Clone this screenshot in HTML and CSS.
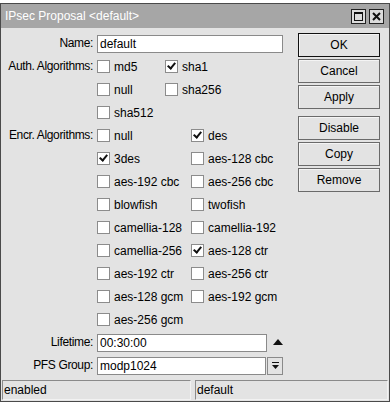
FILE: index.html
```html
<!DOCTYPE html>
<html lang="en">
<head>
    <meta charset="UTF-8">
    <title>IPsec Proposal &lt;default&gt;</title>
    <link rel="stylesheet" href="styles.css">
</head>
<body>
    <div class="window">
        <div class="titlebar">
            <span class="title">IPsec Proposal &lt;default&gt;</span>
            <div class="title-buttons">
                <span class="tbtn">
                    <svg width="11" height="11" viewBox="0 0 11 11"><rect x="1.5" y="1.5" width="8" height="8" fill="none" stroke="#111" stroke-width="1"/><line x1="1" y1="2" x2="10" y2="2" stroke="#111" stroke-width="2"/></svg>
                </span>
                <span class="tbtn">
                    <svg width="11" height="11" viewBox="0 0 11 11"><path d="M2 2 L9 9 M9 2 L2 9" stroke="#111" stroke-width="2"/></svg>
                </span>
            </div>
        </div>

        <div class="content">
            <div class="form">
                <div class="lbl">Name:</div>
                <div class="row"><div class="textbox wide">default</div></div>

                <div class="lbl">Auth. Algorithms:</div>
                <div class="checks auth">
                    <div class="check"><span class="box"></span>md5</div>
                    <div class="check"><span class="box on"></span>sha1</div>
                    <div class="check"><span class="box"></span>null</div>
                    <div class="check"><span class="box"></span>sha256</div>
                    <div class="check"><span class="box"></span>sha512</div>
                </div>

                <div class="lbl">Encr. Algorithms:</div>
                <div class="checks encr">
                    <div class="check"><span class="box"></span>null</div>
                    <div class="check"><span class="box on"></span>des</div>
                    <div class="check"><span class="box on"></span>3des</div>
                    <div class="check"><span class="box"></span>aes-128 cbc</div>
                    <div class="check"><span class="box"></span>aes-192 cbc</div>
                    <div class="check"><span class="box"></span>aes-256 cbc</div>
                    <div class="check"><span class="box"></span>blowfish</div>
                    <div class="check"><span class="box"></span>twofish</div>
                    <div class="check"><span class="box"></span>camellia-128</div>
                    <div class="check"><span class="box"></span>camellia-192</div>
                    <div class="check"><span class="box"></span>camellia-256</div>
                    <div class="check"><span class="box on"></span>aes-128 ctr</div>
                    <div class="check"><span class="box"></span>aes-192 ctr</div>
                    <div class="check"><span class="box"></span>aes-256 ctr</div>
                    <div class="check"><span class="box"></span>aes-128 gcm</div>
                    <div class="check"><span class="box"></span>aes-192 gcm</div>
                    <div class="check"><span class="box"></span>aes-256 gcm</div>
                </div>

                <div class="lbl">Lifetime:</div>
                <div class="row">
                    <div class="textbox">00:30:00</div>
                    <span class="up-arrow"></span>
                </div>

                <div class="lbl">PFS Group:</div>
                <div class="row">
                    <div class="textbox">modp1024</div>
                    <span class="drop">
                        <svg width="9" height="10" viewBox="0 0 9 10"><rect x="1" y="1" width="7" height="1" fill="#111"/><path d="M1 4 H8 L4.5 8 Z" fill="#111"/></svg>
                    </span>
                </div>
            </div>

            <div class="actions">
                <div class="btn default">OK</div>
                <div class="btn">Cancel</div>
                <div class="btn">Apply</div>
                <div class="btn spaced">Disable</div>
                <div class="btn">Copy</div>
                <div class="btn">Remove</div>
            </div>
        </div>

        <div class="statusbar">
            <div class="panel left">enabled</div>
            <div class="panel right">default</div>
        </div>
    </div>
</body>
</html>
```

FILE: styles.css
```css
body {
    margin: 0;
    background-color: #ffffff;
    font-family: 'Liberation Sans', Arial, sans-serif;
    font-size: 12px;
    color: #000;
}
.window {
    margin-top: 3px;
    width: 388px;
    border: 1px solid #4a4a4a;
    background-color: #e3e3e3;
    padding-bottom: 1px;
}
.titlebar {
    height: 24px;
    background-color: #a6a6a6;
    display: flex;
    align-items: center;
    justify-content: space-between;
    padding: 0 5px 0 4px;
}
.title {
    color: #ffffff;
    font-size: 12px;
}
.title-buttons {
    display: flex;
    gap: 3px;
}
.tbtn {
    width: 13px;
    height: 13px;
    border: 1px solid #222;
    background-color: #dcdcdc;
    display: flex;
    align-items: center;
    justify-content: center;
}
.content {
    display: flex;
    padding-top: 4px;
}
.form {
    display: grid;
    grid-template-columns: 92px 186px;
    column-gap: 4px;
}
.lbl {
    text-align: right;
    line-height: 23px;
    height: 23px;
    letter-spacing: -0.35px;
    white-space: nowrap;
}
.row {
    height: 23px;
    display: flex;
    align-items: center;
}
.textbox {
    width: 166px;
    height: 16px;
    border: 1px solid #8a8a8a;
    background-color: #ffffff;
    line-height: 16px;
    padding-left: 2px;
    box-sizing: content-box;
}
.textbox.wide {
    width: 183px;
}
.checks {
    display: grid;
    grid-auto-rows: 23px;
}
.checks.auth {
    grid-template-columns: 68px auto;
}
.checks.encr {
    grid-template-columns: 94px auto;
}
.check {
    display: flex;
    align-items: center;
    gap: 4px;
    white-space: nowrap;
}
.box {
    width: 11px;
    height: 11px;
    border: 1px solid #8c8c8c;
    background-color: #ffffff;
    position: relative;
}
.box.on::after {
    content: "";
    position: absolute;
    left: 3px;
    top: 0px;
    width: 3px;
    height: 6px;
    border-right: 2px solid #111;
    border-bottom: 2px solid #111;
    transform: rotate(40deg);
}
.up-arrow {
    margin-left: 6px;
    width: 0;
    height: 0;
    border-left: 5px solid transparent;
    border-right: 5px solid transparent;
    border-bottom: 6px solid #111;
    margin-top: -2px;
}
.drop {
    margin-left: 1px;
    width: 14px;
    height: 16px;
    border: 1px solid #8a8a8a;
    background-color: #e3e3e3;
    display: flex;
    align-items: center;
    justify-content: center;
}
.actions {
    margin-left: 15px;
    margin-top: 1px;
    width: 82px;
    display: flex;
    flex-direction: column;
    gap: 2px;
}
.btn {
    height: 22px;
    border: 1px solid #6a6a6a;
    box-shadow: inset 1px 1px 0 #f4f4f4;
    text-align: center;
    line-height: 22px;
}
.btn.default {
    border-color: #111;
}
.btn.spaced {
    margin-top: 5px;
}
.statusbar {
    display: flex;
    gap: 4px;
    margin-top: 3px;
    padding-left: 1px;
}
.panel {
    height: 18px;
    line-height: 18px;
    border-top: 1px solid #8a8a8a;
    border-left: 1px solid #8a8a8a;
    border-bottom: 1px solid #f2f2f2;
    border-right: 1px solid #f2f2f2;
    padding-left: 1px;
}
.panel.left {
    width: 186px;
}
.panel.right {
    width: 190px;
}
```
